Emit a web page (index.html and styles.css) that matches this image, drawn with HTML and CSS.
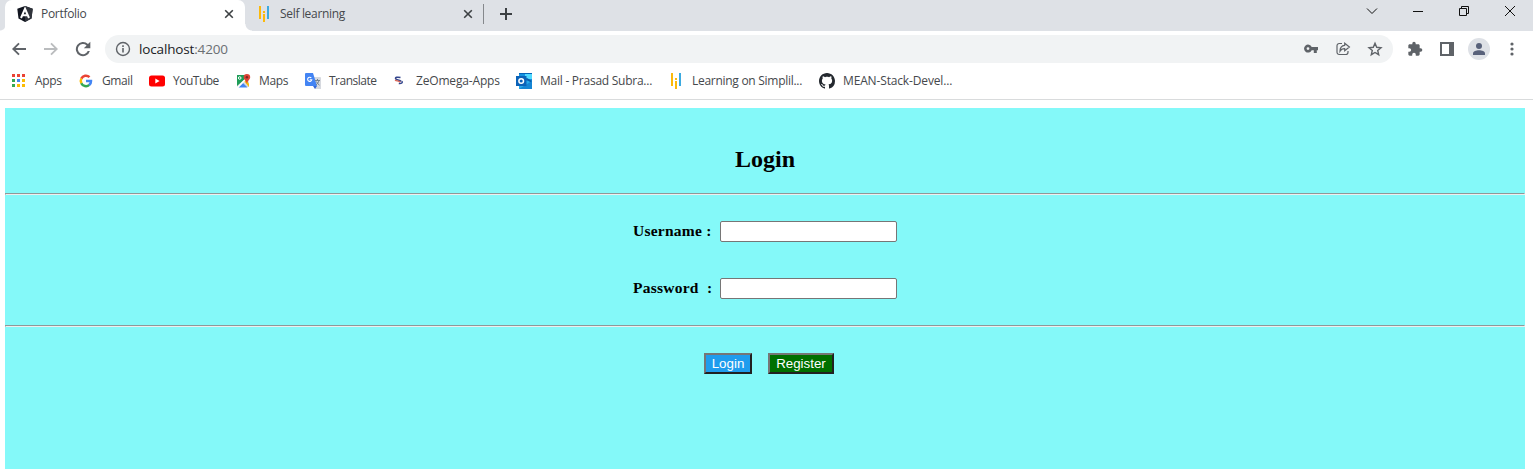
FILE: index.html
```html
<!DOCTYPE html>
<html lang="en">
<head>
<meta charset="utf-8">
<title>Portfolio</title>
<link rel="stylesheet" href="styles.css">
</head>
<body>
<header class="browser">
  <div class="tabs">
    <div class="tab tab-active">
      <svg class="fav" viewBox="0 0 16 16"><path fill="#11151f" d="M8 0l7.700 2.700-1.200 9.700L8 16l-6.500-3.600L.3 2.700z"/><path fill="#30343c" d="M8 0l7.700 2.700-1.200 9.700L8 16z"/><path fill="none" stroke="#fff" stroke-width="2" d="M4 12L8 2.800 12 12M5.600 9.300h4.800"/></svg>
      <span class="tab-title portfolio">Portfolio</span>
      <svg class="close" viewBox="0 0 10 10"><path d="M1.200 1.200l7.600 7.600m0-7.600L1.200 8.800"/></svg>
    </div>
    <div class="tab tab-next">
      <svg class="fav" viewBox="0 0 16 16"><path fill="#fbb90c" d="M3 0h2v13H3zM7 5h2v2H7zM7 8h2v8H7z"/><path fill="#3caae0" d="M11 0h2v13h-2z"/></svg>
      <span class="tab-title">Self learning</span>
      <svg class="close" viewBox="0 0 10 10"><path d="M1.200 1.200l7.600 7.600m0-7.600L1.200 8.800"/></svg>
    </div>
    <span class="divider"></span>
    <svg class="new-tab" viewBox="0 0 12 12"><path d="M6 0v12M0 6h12"/></svg>
    <div class="window-controls">
      <svg viewBox="0 0 12 12"><path d="M1 3.500l5 5 5-5"/></svg>
      <svg viewBox="0 0 12 12"><path d="M1 6.500h10"/></svg>
      <svg viewBox="0 0 12 12"><path d="M1.500 3.500h7v7h-7zM3.500 3.500V1.500h7v7h-2"/></svg>
      <svg viewBox="0 0 12 12"><path d="M1 1l10 10m0-10L1 11"/></svg>
    </div>
  </div>
  <div class="toolbar">
    <svg class="nav" viewBox="0 0 24 24"><path fill="#5f6368" d="M22.500 10.600H6.900l6.100-6.100L11 2.500 1.500 12l9.500 9.500 2-2-6.100-6.100h15.600z"/></svg>
    <svg class="nav" viewBox="0 0 24 24"><path fill="#babcbe" d="M1.500 10.600h15.600L11 4.500l2-2 9.500 9.500-9.500 9.500-2-2 6.100-6.100H1.500z"/></svg>
    <svg class="nav reload" viewBox="0 0 24 24"><path fill="#5f6368" d="M19.500 4.500A10.700 10.700 0 1 0 22.300 15h-3.200A7.700 7.700 0 1 1 17.400 6.600L13.200 10.800H23V1z"/></svg>
    <div class="address">
      <svg class="info" viewBox="0 0 16 16"><circle cx="8" cy="8" r="6.500" fill="none" stroke="#5f6368" stroke-width="1.400"/><path fill="#5f6368" d="M7.200 7h1.600v4.500H7.200zM7.200 4.300h1.600v1.600H7.200z"/></svg>
      <span class="url">localhost<span class="port">:4200</span></span>
      <div class="address-icons">
        <svg viewBox="0 0 16 16"><path fill="#5f6368" fill-rule="evenodd" d="M8.700 6H15v3.200h-1.200V12h-3V9.200H8.700A4 4 0 1 1 8.700 6zM5 6.200a1.400 1.400 0 1 0 0 2.800 1.400 1.400 0 0 0 0-2.800z"/></svg>
        <svg viewBox="0 0 16 16"><path fill="none" stroke="#5f6368" stroke-width="1.200" d="M7 2.500H4.200A2.200 2.200 0 0 0 2 4.700v6.600a2.200 2.200 0 0 0 2.200 2.200h6.600a2.200 2.200 0 0 0 2.200-2.200V10M9.700 2.300L14.400 6 9.700 9.700V7.700C7.500 7.700 6 8.400 5 10.200 5 7 6.700 4.600 9.700 4.300z"/></svg>
        <svg viewBox="0 0 16 16"><path fill="none" stroke="#5f6368" stroke-width="1.400" d="M8 2.300l1.700 4 4.300.4-3.300 2.800 1 4.200L8 11.500l-3.700 2.200 1-4.200L2 6.700l4.300-.4z"/></svg>
      </div>
    </div>
    <svg class="action puzzle" viewBox="0 0 24 24"><path fill="#5f6368" d="M20.500 11H19V7c0-1.100-.9-2-2-2h-4V3.500a2.500 2.500 0 0 0-5 0V5H4c-1.100 0-2 .9-2 2v3.800h1.500a2.700 2.700 0 0 1 0 5.400H2V20c0 1.100.9 2 2 2h3.800v-1.500a2.700 2.700 0 0 1 5.400 0V22H17c1.100 0 2-.9 2-2v-4h1.500a2.500 2.500 0 0 0 0-5z"/></svg>
    <svg class="action panel" viewBox="0 0 14 14"><path fill="#5f6368" fill-rule="evenodd" d="M0 0h14v14H0zM2 2v10h7V2z"/></svg>
    <svg class="avatar" viewBox="0 0 22 22"><circle cx="11" cy="11" r="11" fill="#dee1e6"/><circle cx="11" cy="8" r="3" fill="#58617a"/><path fill="#58617a" d="M5 17v-1.500c0-2 3-3.200 6-3.200s6 1.200 6 3.200V17z"/></svg>
    <svg class="more" viewBox="0 0 4 14"><circle cx="2" cy="2" r="1.600"/><circle cx="2" cy="7" r="1.600"/><circle cx="2" cy="12" r="1.600"/></svg>
  </div>
  <nav class="bookmarks">
    <a class="bm apps"><svg viewBox="0 0 16 16"><path fill="#ea4335" d="M1 1h3v3H1zm5 0h3v3H6zm5 0h3v3h-3z"/><path fill="#34a853" d="M1 6h3v3H1zm0 5h3v3H1z"/><path fill="#4285f4" d="M6 6h3v3H6z"/><path fill="#fbbc04" d="M11 6h3v3h-3zm-5 5h3v3H6zm5 0h3v3h-3z"/></svg><span>Apps</span></a>
    <a class="bm gmail"><svg viewBox="0 0 16 16"><g fill="none" stroke-width="2.500"><path stroke="#ea4335" d="M3.300 5.600A5.100 5.100 0 0 1 11.500 4.200"/><path stroke="#fbbc05" d="M3.400 10.300A5 5 0 0 1 3.400 5.500"/><path stroke="#34a853" d="M3.300 10.200A5.100 5.100 0 0 0 11.300 11.900"/><path stroke="#4285f4" d="M8 8h5A5 5 0 0 1 11.200 12"/></g></svg><span>Gmail</span></a>
    <a class="bm youtube"><svg viewBox="0 0 16 16"><rect y="2.500" width="16" height="11" rx="2.500" fill="#f00"/><path fill="#fff" d="M6.300 5.600v4.800L10.600 8z"/></svg><span>YouTube</span></a>
    <a class="bm maps"><svg viewBox="0 0 16 16"><path fill="#1e9d58" d="M2 2h9v3L2 14z"/><path fill="#d5dae0" d="M2 13L11 5l3 4v5H2z"/><path fill="#fbbc05" d="M9 8l2-2 3 5v3z"/><path fill="#4285f4" d="M3.500 14.500L8 10l4.500 4.500z"/><path fill="#fff" d="M2 14l8-8 1 1-7.500 7.500H2z"/><circle cx="4.700" cy="5" r="1.300" fill="none" stroke="#fff"/><path fill="#dc4437" d="M11.900 1a3.300 3.300 0 0 0-3.300 3.300c0 2.500 2.800 3.200 3.300 6.500.5-3.300 3.300-4 3.300-6.500A3.300 3.300 0 0 0 11.900 1z"/><circle cx="11.900" cy="4.300" r="1.200" fill="#802722"/></svg><span>Maps</span></a>
    <a class="bm translate"><svg viewBox="0 0 16 16"><path fill="#d6d9df" d="M6 4h9a1 1 0 0 1 1 1v11h-6z"/><path fill="#4384f3" d="M1 0h7l4 13H1a1 1 0 0 1-1-1V1a1 1 0 0 1 1-1z"/><path fill="#3367d6" d="M8 13h4l-2 3z"/><path fill="none" stroke="#fff" stroke-width="1.100" d="M6.300 4.900A2.100 2.100 0 1 0 6.800 6.700H4.700"/><path fill="none" stroke="#748390" d="M10 7.500h5M12.500 6v1.500M14 7.500c-.5 2-2 3.500-3 4.500M11.300 8.500c.8 1.700 2 2.700 3.200 3.700"/></svg><span>Translate</span></a>
    <a class="bm zeomega"><svg viewBox="0 0 16 16"><path fill="none" stroke="#34478e" stroke-width="1.500" d="M8.500 4.500C5.500 3.700 3 4.300 3.600 5.700S8 6.700 9.300 8.500"/><path fill="none" stroke="#dd6a5a" stroke-width="1.400" d="M3 7.200c2 1 3.800.2 5.300 2"/><path fill="none" stroke="#34478e" stroke-width="1.500" d="M9.800 8.200c1.200 1.500-.2 2.600-3 2.300"/></svg><span>ZeOmega-Apps</span></a>
    <a class="bm mail"><svg viewBox="0 0 16 16"><path fill="#1490df" d="M3 0h13v8H3z"/><path fill="#50d9ff" d="M9 1h7v5H9z"/><path fill="#0364b8" d="M3 0h13v1H3z"/><path fill="#28a8ea" d="M3 8h13v8H3z"/><path fill="#0a5ba8" d="M9 6l7 4V8l-5-3z"/><path fill="#1585d4" d="M3 16l13-8v8z"/><rect y="3" width="10.500" height="10" fill="#0b62b8"/><circle cx="5.200" cy="8" r="2.300" fill="none" stroke="#fff" stroke-width="1.500"/></svg><span>Mail - Prasad Subra...</span></a>
    <a class="bm learning"><svg viewBox="0 0 16 16"><path fill="#fbb90c" d="M3 0h2v13H3zM7 5h2v2H7zM7 8h2v8H7z"/><path fill="#3caae0" d="M11 0h2v13h-2z"/></svg><span>Learning on Simplil...</span></a>
    <a class="bm github"><svg viewBox="0 0 16 16"><path fill="#24292f" d="M8 0C3.580 0 0 3.580 0 8c0 3.540 2.290 6.530 5.470 7.590.4.070.55-.17.55-.38 0-.19-.01-.82-.01-1.490-2.010.37-2.530-.49-2.690-.94-.09-.23-.48-.94-.82-1.130-.28-.15-.68-.52-.01-.53.63-.01 1.080.58 1.230.82.72 1.210 1.870.87 2.330.66.07-.52.28-.87.51-1.070-1.780-.2-3.640-.89-3.640-3.950 0-.87.31-1.590.82-2.150-.08-.2-.36-1.020.08-2.120 0 0 .67-.21 2.200.82.64-.18 1.320-.27 2-.27s1.360.09 2 .27c1.530-1.040 2.200-.82 2.200-.82.44 1.100.16 1.920.08 2.120.51.56.82 1.270.82 2.150 0 3.070-1.870 3.750-3.650 3.950.29.25.54.73.54 1.480 0 1.070-.01 1.930-.01 2.200 0 .21.15.46.55.38A8.010 8.010 0 0 0 16 8c0-4.420-3.580-8-8-8z"/></svg><span>MEAN-Stack-Devel...</span></a>
  </nav>
</header>
<main class="page">
  <h2>Login</h2>
  <hr>
  <form class="fields">
    <label class="field"><span class="label">Username :</span><input type="text"></label>
    <label class="field"><span class="label">Password&nbsp; :</span><input type="password"></label>
  </form>
  <hr>
  <div class="buttons">
    <button class="btn login" type="button">Login</button>
    <button class="btn register" type="button">Register</button>
  </div>
</main>
</body>
</html>
```
FILE: styles.css
```css
* { box-sizing: border-box; }
body { margin: 0; height: 476px; overflow: hidden; background: #fff; font-family: "Liberation Serif", "Times New Roman", serif; }
svg { display: block; flex: none; }
.browser { height: 100px; border-bottom: 1px solid #d9dbdc; font: 12px "Open Sans", sans-serif; color: #45484c; }
.tabs { display: flex; height: 31px; padding-left: 5px; background: radial-gradient(circle at 0 0, #dee1e6 5px, #fff 6px) 0 25px / 5px 6px no-repeat, #dee1e6; }
.tab { display: flex; align-items: center; width: 239px; padding: 0 12px 3px; white-space: nowrap; }
.tab-active { width: 240px; background: #fff; border-radius: 7px 7px 0 0; }
.tab-next { padding-left: 11px; background: radial-gradient(circle at 100% 0, #dee1e6 6px, #fff 7px) 0 24px / 7px 7px no-repeat; }
.fav { width: 16px; height: 16px; margin-right: 8px; }
.tab-title { flex: 1; line-height: 16px; letter-spacing: -0.32px; }
.portfolio { letter-spacing: -0.3px; }
.close { width: 10px; height: 10px; stroke: #3c4043; stroke-width: 1.6; margin-right: -1px; }
.divider { width: 1px; height: 20px; margin-top: 4px; margin-left: -1px; background: #85888c; }
.new-tab { width: 12px; height: 12px; margin: 8px 0 0 16px; stroke: #3c4043; stroke-width: 2; }
.window-controls { display: flex; gap: 34px; margin: 5px 17px 0 auto; }
.window-controls svg { width: 12px; height: 12px; fill: none; stroke: #111; stroke-width: 1; }
.toolbar { display: flex; align-items: center; height: 36px; padding-left: 11px; }
.nav { width: 16px; height: 16px; margin-right: 16px; }
.reload { margin-right: 14px; }
.address { display: flex; align-items: center; width: 1288px; height: 28px; padding: 0 10px; border-radius: 14px; background: #f1f3f4; }
.info { width: 16px; height: 16px; margin-right: 8px; }
.url { font-size: 13.5px; letter-spacing: -0.15px; color: #202124; }
.port { color: #6b6f73; }
.address-icons { display: flex; gap: 16px; margin-left: auto; }
.address-icons svg { width: 16px; height: 16px; }
.puzzle { width: 16px; height: 16px; margin-left: 14px; }
.panel { width: 14px; height: 14px; margin-left: 17px; }
.avatar { width: 22px; height: 22px; margin-left: 14px; }
.more { width: 4px; height: 14px; margin-left: 20px; fill: #5f6368; }
.bookmarks { display: flex; height: 28px; padding-left: 11px; }
.bm { display: flex; align-items: center; gap: 8px; white-space: nowrap; letter-spacing: -0.25px; }
.bm svg { width: 16px; height: 16px; }
.bm span { line-height: 16px; }
.apps { width: 67px; letter-spacing: -0.3px; }
.gmail { width: 71px; letter-spacing: -0.4px; }
.youtube { width: 86px; letter-spacing: -0.5px; }
.maps { width: 70px; letter-spacing: -0.35px; }
.translate { width: 87px; letter-spacing: -0.5px; }
.zeomega { width: 124px; letter-spacing: -0.17px; }
.mail { width: 152px; }
.learning { width: 151px; letter-spacing: -0.28px; }
.github { letter-spacing: -0.15px; }
.page { display: flow-root; width: 1520px; height: 361px; margin: 8px 0 0 5px; background: #84f9f9; }
h2 { margin: 38px 0 20px; font-size: 24px; line-height: 27px; text-align: center; color: #000; }
hr { height: 2px; margin: 0; border: 1px solid; border-color: #8f9898 #eee #eee #8f9898; }
.fields { display: flex; flex-direction: column; gap: 36px; height: 130px; padding-top: 26px; }
.field { display: flex; align-items: center; height: 21px; margin-left: 628px; }
.label { width: 87px; padding-bottom: 2px; font-size: 15.5px; font-weight: bold; white-space: nowrap; letter-spacing: 0.25px; }
input { width: 177px; height: 21px; margin: 0; padding: 1px 2px; border: 1px solid #767676; border-radius: 2px; background: #fff; }
.buttons { display: flex; gap: 16px; padding: 26px 0 0 699px; }
.btn { height: 21px; padding: 0; border: 2px solid; border-color: #767676 #212121 #212121 #767676; font: 13.333px "Liberation Sans", Arial, sans-serif; line-height: 15px; color: #fff; }
.login { width: 48px; background: #1f9ced; }
.register { width: 66px; background: #007000; }
```
